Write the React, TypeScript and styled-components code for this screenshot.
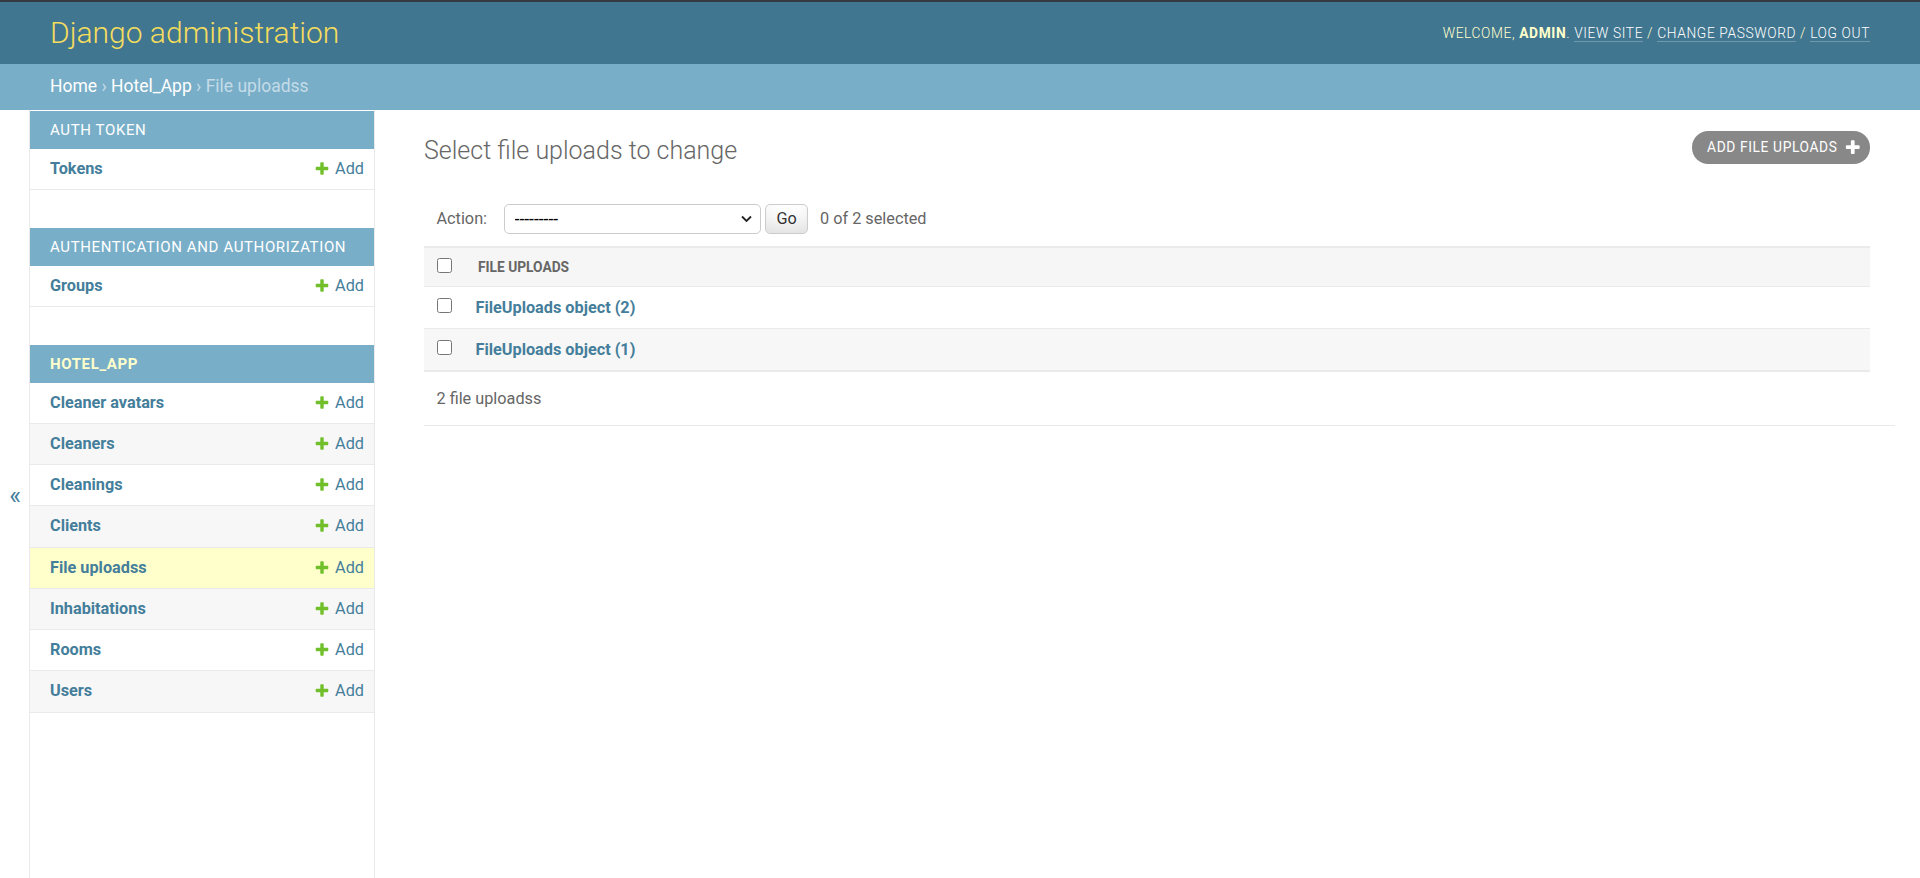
import React from "react";
import styled, { createGlobalStyle } from "styled-components";

const GlobalStyle = createGlobalStyle`
  html, body { margin: 0; padding: 0; height: 100%; }
  body {
    font-family: Roboto, "Liberation Sans", Arial, sans-serif;
    font-size: 17.5px;
    color: #333;
    background: #fff;
  }
  #root { height: 100%; }
  *, *::before, *::after { box-sizing: border-box; }
  a { text-decoration: none; }
`;

const Page = styled.div`
  display: flex;
  flex-direction: column;
  min-height: 100vh;
`;

const Header = styled.header`
  display: flex;
  justify-content: space-between;
  align-items: center;
  padding: 12.5px 50px;
  background: #417690;
  color: #ffc;
  border-top: 2px solid #353b3f;
`;

const Brand = styled.h1`
  margin: 0;
  font-size: 30px;
  line-height: 36.5px;
  font-weight: 300;
  color: #f5dd5d;
`;

const UserTools = styled.div`
  font-size: 13.75px;
  font-weight: 300;
  letter-spacing: 0.625px;
  text-transform: uppercase;
  color: #ffc;
  strong { font-weight: 700; }
`;

const ToolLink = styled.a`
  color: #fff;
  border-bottom: 1px solid rgba(255, 255, 255, 0.25);
`;

const Breadcrumbs = styled.nav`
  background: #79aec8;
  padding: 12.5px 50px;
  font-size: 17.5px;
  line-height: 21.5px;
  color: #c4dce8;
`;

const Crumb = styled.a`
  color: #fff;
`;

const Main = styled.div`
  display: flex;
  flex: 1 0 auto;
`;

const ToggleButton = styled.button`
  flex: 0 0 30px;
  width: 30px;
  border: 0;
  border-right: 1px solid #eaeaea;
  background: #fff;
  color: #447e9b;
  font-size: 25px;
  font-family: Roboto, "Liberation Sans", Arial, sans-serif;
  padding: 3px 0 0 1px;
  cursor: pointer;
`;

const Sidebar = styled.nav`
  flex: 0 0 345px;
  width: 345px;
  border-right: 1px solid #eaeaea;
  padding-top: 1px;
  background: #fff;
`;

const Module = styled.section`
  margin-bottom: 37.5px;
`;

const Caption = styled.div<{ $current?: boolean }>`
  background: #79aec8;
  padding: 10px 10px 10px 20px;
  font-size: 15px;
  line-height: 18px;
  letter-spacing: 0.625px;
  text-transform: uppercase;
  color: ${(p) => (p.$current ? "#ffc" : "#fff")};
  font-weight: ${(p) => (p.$current ? 700 : 400)};
`;

const ModelRow = styled.div<{ $bg: string }>`
  display: flex;
  justify-content: space-between;
  align-items: center;
  padding: 10px 10px 10px 20px;
  line-height: 20.25px;
  font-size: 16.25px;
  background: ${(p) => p.$bg};
  border-bottom: 1px solid #eaeaea;
`;

const ModelName = styled.a`
  color: #447e9b;
  font-weight: 700;
`;

const AddLink = styled.a`
  display: inline-flex;
  align-items: center;
  gap: 5px;
  color: #447e9b;
  font-weight: 400;
`;

const Content = styled.main`
  flex: 1;
  min-width: 0;
  padding: 25px 50px 25px 49px;
`;

const TitleRow = styled.div`
  display: flex;
  justify-content: space-between;
  align-items: flex-start;
  margin-bottom: 25px;
`;

const Title = styled.h1`
  margin: 0;
  font-size: 25px;
  line-height: 31.25px;
  font-weight: 300;
  color: #666;
`;

const AddButton = styled.a`
  display: inline-flex;
  align-items: center;
  gap: 6.25px;
  margin-top: -4px;
  height: 32.5px;
  padding: 0 8.75px 0 15px;
  background: #888;
  color: #fff;
  border-radius: 16.25px;
  font-size: 13.75px;
  letter-spacing: 0.625px;
  text-transform: uppercase;
`;

const ActionsBar = styled.div`
  display: flex;
  align-items: center;
  padding: 12.5px;
  line-height: 30px;
`;

const ActionLabel = styled.label`
  font-size: 16.25px;
  color: #666;
`;

const SelectWrap = styled.span`
  position: relative;
  display: inline-flex;
  margin-left: 16.5px;
`;

const ActionSelect = styled.select`
  appearance: none;
  -webkit-appearance: none;
  width: 257px;
  height: 30px;
  padding: 0 0 0 10px;
  border: 1px solid #ccc;
  border-radius: 5px;
  background: #fff;
  color: #000;
  font-size: 17.5px;
  font-family: Roboto, "Liberation Sans", Arial, sans-serif;
`;

const Chevron = styled.svg`
  position: absolute;
  right: 9px;
  top: 11px;
  pointer-events: none;
`;

const GoButton = styled.button`
  height: 30px;
  width: 43px;
  margin-left: 4.5px;
  padding: 0;
  border: 1px solid #ccc;
  border-radius: 5px;
  background: #fff;
  box-shadow: 0 -18.75px 25px -12.5px rgba(0, 0, 0, 0.15) inset;
  color: #333;
  font-size: 16.25px;
  font-family: Roboto, "Liberation Sans", Arial, sans-serif;
`;

const Counter = styled.span`
  margin-left: 12px;
  font-size: 16.25px;
  color: #666;
`;

const Table = styled.table`
  width: 100%;
  border-collapse: collapse;
  border-top: 2px solid #eaeaea;
`;

const HeadCell = styled.th<{ $check?: boolean }>`
  background: #f6f6f6;
  padding: ${(p) => (p.$check ? "10px 0" : "10px 12.5px")};
  width: ${(p) => (p.$check ? "41.5px" : "auto")};
  text-align: ${(p) => (p.$check ? "center" : "left")};
  line-height: 18px;
  font-size: 13.75px;
  font-weight: 700;
  text-transform: uppercase;
  color: #666;
  border-bottom: 1px solid #eaeaea;
  vertical-align: top;
`;

const BodyRow = styled.tr<{ $alt: boolean; $last: boolean }>`
  background: ${(p) => (p.$alt ? "#f7f7f7" : "#fff")};
  border-bottom: ${(p) => (p.$last ? "2px" : "1px")} solid #eaeaea;
`;

const CheckCell = styled.td`
  width: 41.5px;
  padding: 10px 0;
  text-align: center;
  vertical-align: top;
  line-height: 21px;
`;

const LinkCell = styled.th`
  padding: 10px;
  text-align: left;
  line-height: 21px;
  font-size: 16.25px;
  font-weight: 700;
  vertical-align: top;
`;

const ObjectLink = styled.a`
  color: #447e9b;
`;

const Check = styled.input<{ $offset?: number }>`
  display: block;
  width: 15px;
  height: 15px;
  margin: ${(p) => p.$offset ?? 0}px auto 0;
`;

const Paginator = styled.p`
  margin: 0;
  width: calc(100% + 25px);
  padding: 12.5px;
  line-height: 27.5px;
  font-size: 16.25px;
  color: #666;
  border-bottom: 1px solid #eaeaea;
`;

const PLUS_PATH =
  "M1600 736v192q0 40-28 68t-68 28h-416v416q0 40-28 68t-68 28h-192q-40 0-68-28t-28-68v-416h-416q-40 0-68-28t-28-68v-192q0-40 28-68t68-28h416v-416q0-40 28-68t68-28h192q40 0 68 28t28 68v416h416q40 0 68 28t28 68z";

const PlusIcon = ({ size, color }: { size: number; color: string }) => (
  <svg width={size} height={size} viewBox="0 0 1792 1792" aria-hidden="true">
    <path fill={color} d={PLUS_PATH} />
  </svg>
);

const apps = [
  { name: "Auth Token", models: ["Tokens"] },
  { name: "Authentication and Authorization", models: ["Groups"] },
  {
    name: "Hotel_App",
    current: true,
    models: [
      "Cleaner avatars",
      "Cleaners",
      "Cleanings",
      "Clients",
      "File uploadss",
      "Inhabitations",
      "Rooms",
      "Users",
    ],
  },
];

const objects = ["FileUploads object (2)", "FileUploads object (1)"];

export default function App() {
  return (
    <Page>
      <GlobalStyle />
      <Header>
        <Brand>Django administration</Brand>
        <UserTools>
          Welcome, <strong>admin</strong>. <ToolLink href="#">View site</ToolLink> /{" "}
          <ToolLink href="#">Change password</ToolLink> / <ToolLink href="#">Log out</ToolLink>
        </UserTools>
      </Header>
      <Breadcrumbs>
        <Crumb href="#">Home</Crumb> › <Crumb href="#">Hotel_App</Crumb> › File uploadss
      </Breadcrumbs>
      <Main>
        <ToggleButton type="button">{"\u00AB"}</ToggleButton>
        <Sidebar>
          {apps.map((app) => (
            <Module key={app.name}>
              <Caption $current={app.current}>{app.name}</Caption>
              {app.models.map((m, i) => (
                <ModelRow
                  key={m}
                  $bg={m === "File uploadss" ? "#ffc" : i % 2 === 1 ? "#f7f7f7" : "#fff"}
                >
                  <ModelName href="#">{m}</ModelName>
                  <AddLink href="#">
                    <PlusIcon size={16} color="#70bf2b" />
                    Add
                  </AddLink>
                </ModelRow>
              ))}
            </Module>
          ))}
        </Sidebar>
        <Content>
          <TitleRow>
            <Title>Select file uploads to change</Title>
            <AddButton href="#">
              Add file uploads
              <PlusIcon size={17.5} color="#fff" />
            </AddButton>
          </TitleRow>
          <ActionsBar>
            <ActionLabel>Action:</ActionLabel>
            <SelectWrap>
              <ActionSelect defaultValue="">
                <option value="">---------</option>
                <option value="delete">Delete selected file uploadss</option>
              </ActionSelect>
              <Chevron width="11" height="8" viewBox="0 0 11 8" aria-hidden="true">
                <path d="M1 1.5 L5.5 6 L10 1.5" fill="none" stroke="#222" strokeWidth="1.8" />
              </Chevron>
            </SelectWrap>
            <GoButton type="button">Go</GoButton>
            <Counter>0 of 2 selected</Counter>
          </ActionsBar>
          <Table>
            <thead>
              <tr>
                <HeadCell $check>
                  <Check type="checkbox" />
                </HeadCell>
                <HeadCell>File uploads</HeadCell>
              </tr>
            </thead>
            <tbody>
              {objects.map((o, i) => (
                <BodyRow key={o} $alt={i % 2 === 1} $last={i === objects.length - 1}>
                  <CheckCell>
                    <Check type="checkbox" $offset={1} />
                  </CheckCell>
                  <LinkCell>
                    <ObjectLink href="#">{o}</ObjectLink>
                  </LinkCell>
                </BodyRow>
              ))}
            </tbody>
          </Table>
          <Paginator>2 file uploadss</Paginator>
        </Content>
      </Main>
    </Page>
  );
}
